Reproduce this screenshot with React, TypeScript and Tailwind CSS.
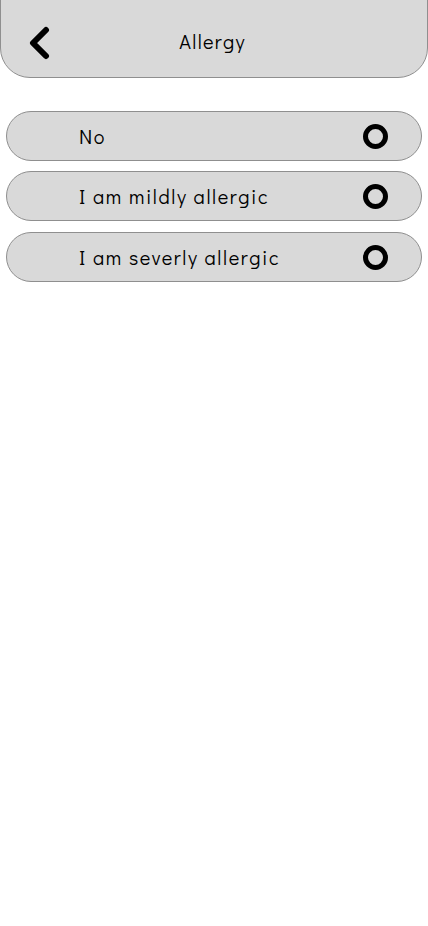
import React from "react";

const options = ["No", "I am mildly allergic", "I am severly allergic"];

export default function App() {
  return (
    <div className="w-[428px] min-h-[926px] bg-white" style={{ fontFamily: '"Didact Gothic", "Noto Sans", sans-serif' }}>
      <div className="-mt-[30px] h-[108px] bg-[#d9d9d9] border border-[#8f8f8f] rounded-[30px] flex items-end pb-[16px] relative">
        <div className="w-full flex items-center h-[40px]">
          <div className="w-[24px] ml-[26px] flex items-center pt-[4px]">
            <svg width="24" height="34" viewBox="0 0 24 34">
              <path d="M19 4 L6 17 L19 30" fill="none" stroke="#000" strokeWidth="6" strokeLinecap="round" strokeLinejoin="round" />
            </svg>
          </div>
          <div className="flex-1 text-center text-[20px] tracking-[1.3px] text-black pr-[53px]">Allergy</div>
        </div>
      </div>
      <div className="mt-[33px] px-[6px] flex flex-col gap-[10px]">
        {options.map((o, i) => (
          <div
            key={o}
            className={`h-[50px] bg-[#d9d9d9] border border-[#8f8f8f] rounded-full flex items-center pl-[72px] pr-[33px] ${i === 2 ? "mt-[1px]" : ""}`}
          >
            <span className="flex-1 text-[20px] text-black tracking-[1.6px]">{o}</span>
            <span className="w-[25px] h-[25px] rounded-full border-[5px] border-black" />
          </div>
        ))}
      </div>
    </div>
  );
}
